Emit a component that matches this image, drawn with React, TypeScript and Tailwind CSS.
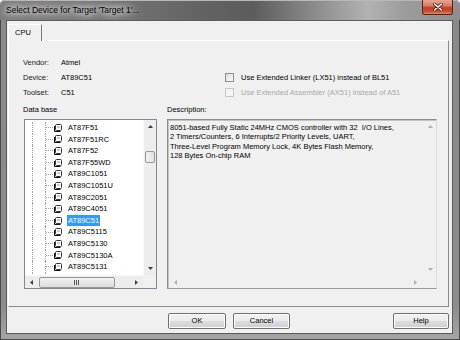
import React from "react";

const items = [
  "AT87F51",
  "AT87F51RC",
  "AT87F52",
  "AT87F55WD",
  "AT89C1051",
  "AT89C1051U",
  "AT89C2051",
  "AT89C4051",
  "AT89C51",
  "AT89C5115",
  "AT89C5130",
  "AT89C5130A",
  "AT89C5131",
  "AT89C5132",
];

function Chip() {
  return (
    <svg width="10" height="10" viewBox="0 0 10 10" className="shrink-0">
      <rect x="2.5" y="1.5" width="6" height="6" rx="1" fill="#ffffff" stroke="#333" />
      <path d="M1.5 3v5.5h6" stroke="#111" strokeWidth="1" fill="none" />
      <path d="M4 4h3" stroke="#9a9a9a" />
    </svg>
  );
}

function Arrow({ dir, color = "#3c3c3c" }: { dir: "up" | "down" | "left" | "right"; color?: string }) {
  const d =
    dir === "up"
      ? "M1 5L3.5 2L6 5Z"
      : dir === "down"
      ? "M1 2L3.5 5L6 2Z"
      : dir === "left"
      ? "M5 1L2 3.5L5 6Z"
      : "M2 1L5 3.5L2 6Z";
  return (
    <svg width="7" height="7" viewBox="0 0 7 7">
      <path d={d} fill={color} />
    </svg>
  );
}

function Button({ label, w }: { label: string; w: string }) {
  return (
    <div
      className={`${w} h-[16px] flex items-center justify-center rounded-[2px] border border-[#707070] bg-[linear-gradient(180deg,#f2f2f2_0%,#ebebeb_50%,#dddddd_51%,#cfcfcf_100%)] shadow-[inset_0_0_0_1px_#fcfcfc]`}
    >
      {label}
    </div>
  );
}

export default function App() {
  return (
    <div className="w-[460px] h-[340px] bg-white font-['Liberation_Sans',Arial,sans-serif] text-[7.5px] leading-none text-black">
      <div className="w-[460px] h-[340px] flex flex-col rounded-t-[5px] bg-[linear-gradient(180deg,#8a8a8a_0%,#8c8c8c_90%,#a6a6a6_100%)] shadow-[inset_0_0_0_1px_#4a4a4a]">
        {/* Title bar */}
        <div className="h-[20px] flex items-start justify-between pl-[6px] pr-[7px] rounded-t-[5px] bg-[linear-gradient(90deg,#7c7c7c_0%,#747474_25%,#626262_45%,#5c5c5c_55%,#8a8a8a_68%,#b2b2b2_80%,#9c9c9c_88%,#8e8e8e_100%)] shadow-[inset_0_1px_0_#b8b8b8]">
          <div className="mt-[6px] text-[8.5px] text-black [text-shadow:0_0_5px_#fff,0_0_8px_#fff,0_0_12px_#e8e8e8]">
            Select Device for Target 'Target 1'...
          </div>
          <div className="w-[31px] h-[15px] flex items-center justify-center rounded-b-[3px] border border-t-0 border-[#5b2218] bg-[linear-gradient(180deg,#e7a595_0%,#d77d67_40%,#c0412b_55%,#c94b30_80%,#de8a5e_100%)]">
            <svg width="10" height="8" viewBox="0 0 10 8">
              <path d="M1.5 1L8.5 7M8.5 1L1.5 7" stroke="#4a1a10" strokeWidth="3" strokeLinecap="round" />
              <path d="M1.5 1L8.5 7M8.5 1L1.5 7" stroke="#fff" strokeWidth="1.6" strokeLinecap="round" />
            </svg>
          </div>
        </div>

        {/* Content */}
        <div className="ml-[6px] w-[447px] h-[314px] border border-[#5c5c5c] bg-[#f0f0f0] flex flex-col">
          {/* Tab strip */}
          <div className="h-[19px] flex items-end pl-[1px]">
            <div className="relative z-10 w-[34px] h-[17px] -mb-[1px] border-t border-l border-white border-r border-r-[#7a7a7a] bg-[#f0f0f0] flex items-center pl-[6px] pb-[1px]">
              CPU
            </div>
          </div>

          {/* Panel */}
          <div className="ml-[1px] w-[441px] h-[267px] border border-t-white border-l-white border-r-[#8a8a8a] border-b-[#8a8a8a] flex flex-col pt-[14px] pl-[14px]">
            {[
              ["Vendor:", "Atmel", null],
              ["Device:", "AT89C51", "Use Extended Linker (LX51) instead of BL51"],
              ["Toolset:", "C51", "Use Extended Assembler (AX51) instead of A51"],
            ].map(([l, v, c], i) => (
              <div key={i} className="h-[15px] flex items-center">
                <div className="w-[38px] text-[#1a1a1a]">{l}</div>
                <div className="w-[164px]">{v}</div>
                {c && (
                  <div className="flex items-center">
                    <div
                      className={`w-[9px] h-[9px] border ${
                        i === 1 ? "border-[#8e8f8f] bg-[linear-gradient(135deg,#dcdcdc,#fcfcfc)]" : "border-[#c6c6c6] bg-[#f4f4f4]"
                      }`}
                    />
                    <span className={`ml-[7px] ${i === 1 ? "text-black" : "text-[#a8a8a8]"}`}>{c}</span>
                  </div>
                )}
              </div>
            ))}

            <div className="mt-[6px] h-[13px] flex items-start">
              <div className="w-[144px]">Data base</div>
              <div>Description:</div>
            </div>

            <div className="flex">
              {/* Tree */}
              <div className="ml-[1px] w-[133px] h-[170px] border border-[#828790] bg-white flex flex-col">
                <div className="flex h-[155px]">
                  <div className="w-[118px] overflow-hidden pt-[2px]">
                    {items.map((it) => (
                      <div key={it} className="flex h-[11.6px] items-stretch">
                        <div className="w-[7px]" />
                        <div className="w-[13px] border-l border-dotted border-[#a0a0a0]" />
                        <div className="w-[8px] border-l border-dotted border-[#a0a0a0] flex items-center">
                          <div className="w-full h-0 border-t border-dotted border-[#a0a0a0]" />
                        </div>
                        <div className="flex items-center">
                          <Chip />
                        </div>
                        <div className="flex items-center ml-[4px]">
                          <span
                            className={`h-[11.6px] flex items-center px-[1px] ${
                              it === "AT89C51" ? "bg-[#3399ff] text-white" : ""
                            }`}
                          >
                            {it}
                          </span>
                        </div>
                      </div>
                    ))}
                  </div>
                  {/* vertical scrollbar */}
                  <div className="w-[13px] flex flex-col bg-[#ededed] border-l border-[#f8f8f8]">
                    <div className="h-[13px] flex items-center justify-center">
                      <Arrow dir="up" />
                    </div>
                    <div className="h-[18px]" />
                    <div className="h-[12px] mx-[1px] rounded-[2px] border border-[#979797] bg-[linear-gradient(90deg,#f2f2f2,#e2e2e2)]" />
                    <div className="flex-1" />
                    <div className="h-[13px] flex items-center justify-center">
                      <Arrow dir="down" />
                    </div>
                  </div>
                </div>
                {/* horizontal scrollbar */}
                <div className="h-[13px] flex">
                  <div className="w-[118px] flex items-center bg-[#ededed] border-t border-[#f8f8f8]">
                    <div className="w-[12px] flex justify-center">
                      <Arrow dir="left" />
                    </div>
                    <div className="ml-[2px] w-[76px] h-[11px] rounded-[2px] border border-[#979797] bg-[linear-gradient(180deg,#f2f2f2,#dcdcdc)] flex items-center justify-center">
                      <svg width="6" height="5" viewBox="0 0 6 5">
                        <path d="M0.5 0v5M2.5 0v5M4.5 0v5" stroke="#555" />
                      </svg>
                    </div>
                    <div className="flex-1 flex justify-end pr-[3px]">
                      <Arrow dir="right" />
                    </div>
                  </div>
                  <div className="flex-1 bg-[#f0f0f0]" />
                </div>
              </div>

              {/* Description */}
              <div className="ml-[10px] w-[270px] h-[170px] border border-t-[#8a8a8a] border-l-[#8a8a8a] border-r-[#dcdcdc] border-b-[#9a9a9a] bg-[#f0f0f0] flex flex-col shadow-[inset_1px_1px_0_#c4c4c4]">
                <div className="flex flex-1">
                  <div className="flex-1 pl-[2px] pt-[3px] leading-[9.4px]">
                    <div>8051-based Fully Static 24MHz CMOS controller with 32&nbsp; I/O Lines,</div>
                    <div>2 Timers/Counters, 6 Interrupts/2 Priority Levels, UART,</div>
                    <div>Three-Level Program Memory Lock, 4K Bytes Flash Memory,</div>
                    <div>128 Bytes On-chip RAM</div>
                  </div>
                  <div className="w-[12px] flex flex-col justify-between items-center py-[3px]">
                    <Arrow dir="up" color="#b0b0b0" />
                    <Arrow dir="down" color="#b0b0b0" />
                  </div>
                </div>
                <div className="h-[12px] flex">
                  <div className="flex-1 flex items-center justify-between px-[4px] pr-[17px]">
                    <Arrow dir="left" color="#b0b0b0" />
                    <Arrow dir="right" color="#b0b0b0" />
                  </div>
                </div>
              </div>
            </div>
          </div>

          {/* Buttons */}
          <div className="mt-[6px] flex pl-[161px]">
            <Button label="OK" w="w-[58px]" />
            <div className="w-[7px]" />
            <Button label="Cancel" w="w-[57px]" />
            <div className="w-[103px]" />
            <Button label="Help" w="w-[56px]" />
          </div>
        </div>
      </div>
    </div>
  );
}
